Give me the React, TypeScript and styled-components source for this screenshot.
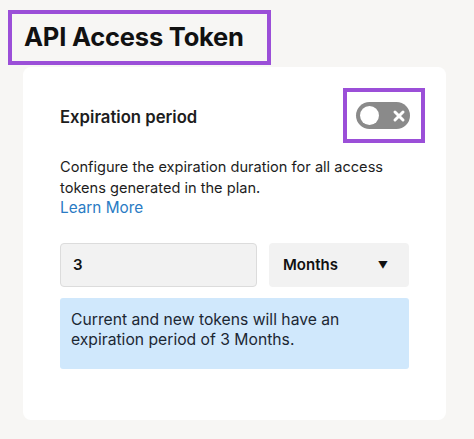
import { useState } from "react";
import styled, { createGlobalStyle } from "styled-components";

const GlobalStyle = createGlobalStyle`
	html, body {
		margin: 0;
		background: #f7f6f4;
		font-family: Inter, "Noto Sans", sans-serif;
		color: #1d1d1d;
	}
`;

const PageBase = styled.div({
	display: "flex",
	flexDirection: "column",
	padding: "10px 0 0 8px",
	height: 429,
});

const TitleBox = styled.div({
	boxSizing: "border-box",
	width: 263,
	height: 55,
	border: "4px solid #9b4fd8",
	display: "flex",
	alignItems: "center",
	paddingLeft: 12,
	paddingBottom: 2,
	fontSize: 25.5,
	fontWeight: 700,
	letterSpacing: -0.2,
	color: "#111",
});

const Card = styled.div({
	boxSizing: "border-box",
	width: 423,
	height: 353,
	marginTop: 2,
	marginLeft: 15,
	background: "#fff",
	borderRadius: 8,
	padding: "21px 21px 0 37px",
	display: "flex",
	flexDirection: "column",
});

const HeaderRow = styled.div({
	display: "flex",
	alignItems: "center",
	justifyContent: "space-between",
});

const Label = styled.div({
	fontSize: 16.7,
	fontWeight: 600,
	paddingTop: 2,
});

const HighlightBox = styled.div({
	boxSizing: "border-box",
	width: 82,
	height: 55,
	border: "4px solid #9b4fd8",
	display: "flex",
	alignItems: "center",
	justifyContent: "center",
	paddingRight: 2,
});

const Toggle = styled.button<{ $on: boolean }>(({ $on }) => ({
	width: 54,
	height: 27,
	borderRadius: 14,
	border: "none",
	padding: "0 4px",
	background: $on ? "#2a7bc4" : "#8a8a8a",
	display: "flex",
	alignItems: "center",
	justifyContent: "space-between",
	cursor: "pointer",
	flexDirection: $on ? "row-reverse" : "row",
}));

const Knob = styled.span({
	width: 19,
	height: 19,
	borderRadius: "50%",
	background: "#fff",
});

const Description = styled.p({
	margin: "14px 0 0",
	fontSize: 14.6,
	lineHeight: "20.5px",
});

const LearnMore = styled.a({
	display: "block",
	color: "#2a7bc4",
	textDecoration: "none",
	fontSize: 15.3,
});

const FieldRow = styled.div({
	display: "flex",
	gap: 12,
	marginTop: 24,
});

const NumberInput = styled.input({
	boxSizing: "border-box",
	width: 197,
	height: 44,
	background: "#f2f2f2",
	border: "1px solid #dcdcdc",
	borderRadius: 4,
	padding: "0 12px",
	fontFamily: "inherit",
	fontSize: 15,
	fontWeight: 600,
	color: "#111",
	outline: "none",
});

const SelectBox = styled.div({
	boxSizing: "border-box",
	width: 140,
	height: 44,
	background: "#f2f2f2",
	borderRadius: 4,
	padding: "0 21px 0 14px",
	display: "flex",
	alignItems: "center",
	justifyContent: "space-between",
	fontSize: 15,
	fontWeight: 600,
	color: "#111",
});

const Caret = styled.span({
	fontSize: 10,
});

const InfoBox = styled.div({
	boxSizing: "border-box",
	width: 349,
	marginTop: 11,
	background: "#d0e8fc",
	borderRadius: 3,
	padding: "12px 11px 19px",
	fontSize: 15.7,
	lineHeight: "20px",
	color: "#1c2733",
});

function XMark() {
	return (
		<svg width="14" height="14" viewBox="0 0 14 14" aria-hidden="true">
			<path
				d="M3 3 L11 11 M11 3 L3 11"
				stroke="#fff"
				strokeWidth="3"
				strokeLinecap="round"
			/>
		</svg>
	);
}

export default function App() {
	const [enabled, setEnabled] = useState(false);
	const [amount, setAmount] = useState("3");

	return (
		<PageBase>
			<GlobalStyle />
			<TitleBox>API Access Token</TitleBox>
			<Card>
				<HeaderRow>
					<Label>Expiration period</Label>
					<HighlightBox>
						<Toggle
							type="button"
							$on={enabled}
							onClick={() => setEnabled((v) => !v)}
						>
							<Knob />
							<XMark />
						</Toggle>
					</HighlightBox>
				</HeaderRow>
				<Description>
					Configure the expiration duration for all access tokens generated in
					the plan.
					<LearnMore href="#">Learn More</LearnMore>
				</Description>
				<FieldRow>
					<NumberInput
						value={amount}
						onChange={(e) => setAmount(e.target.value)}
					/>
					<SelectBox>
						Months
						<Caret>▼</Caret>
					</SelectBox>
				</FieldRow>
				<InfoBox>
					{`Current and new tokens will have an expiration period of ${amount} Months.`}
				</InfoBox>
			</Card>
		</PageBase>
	);
}
